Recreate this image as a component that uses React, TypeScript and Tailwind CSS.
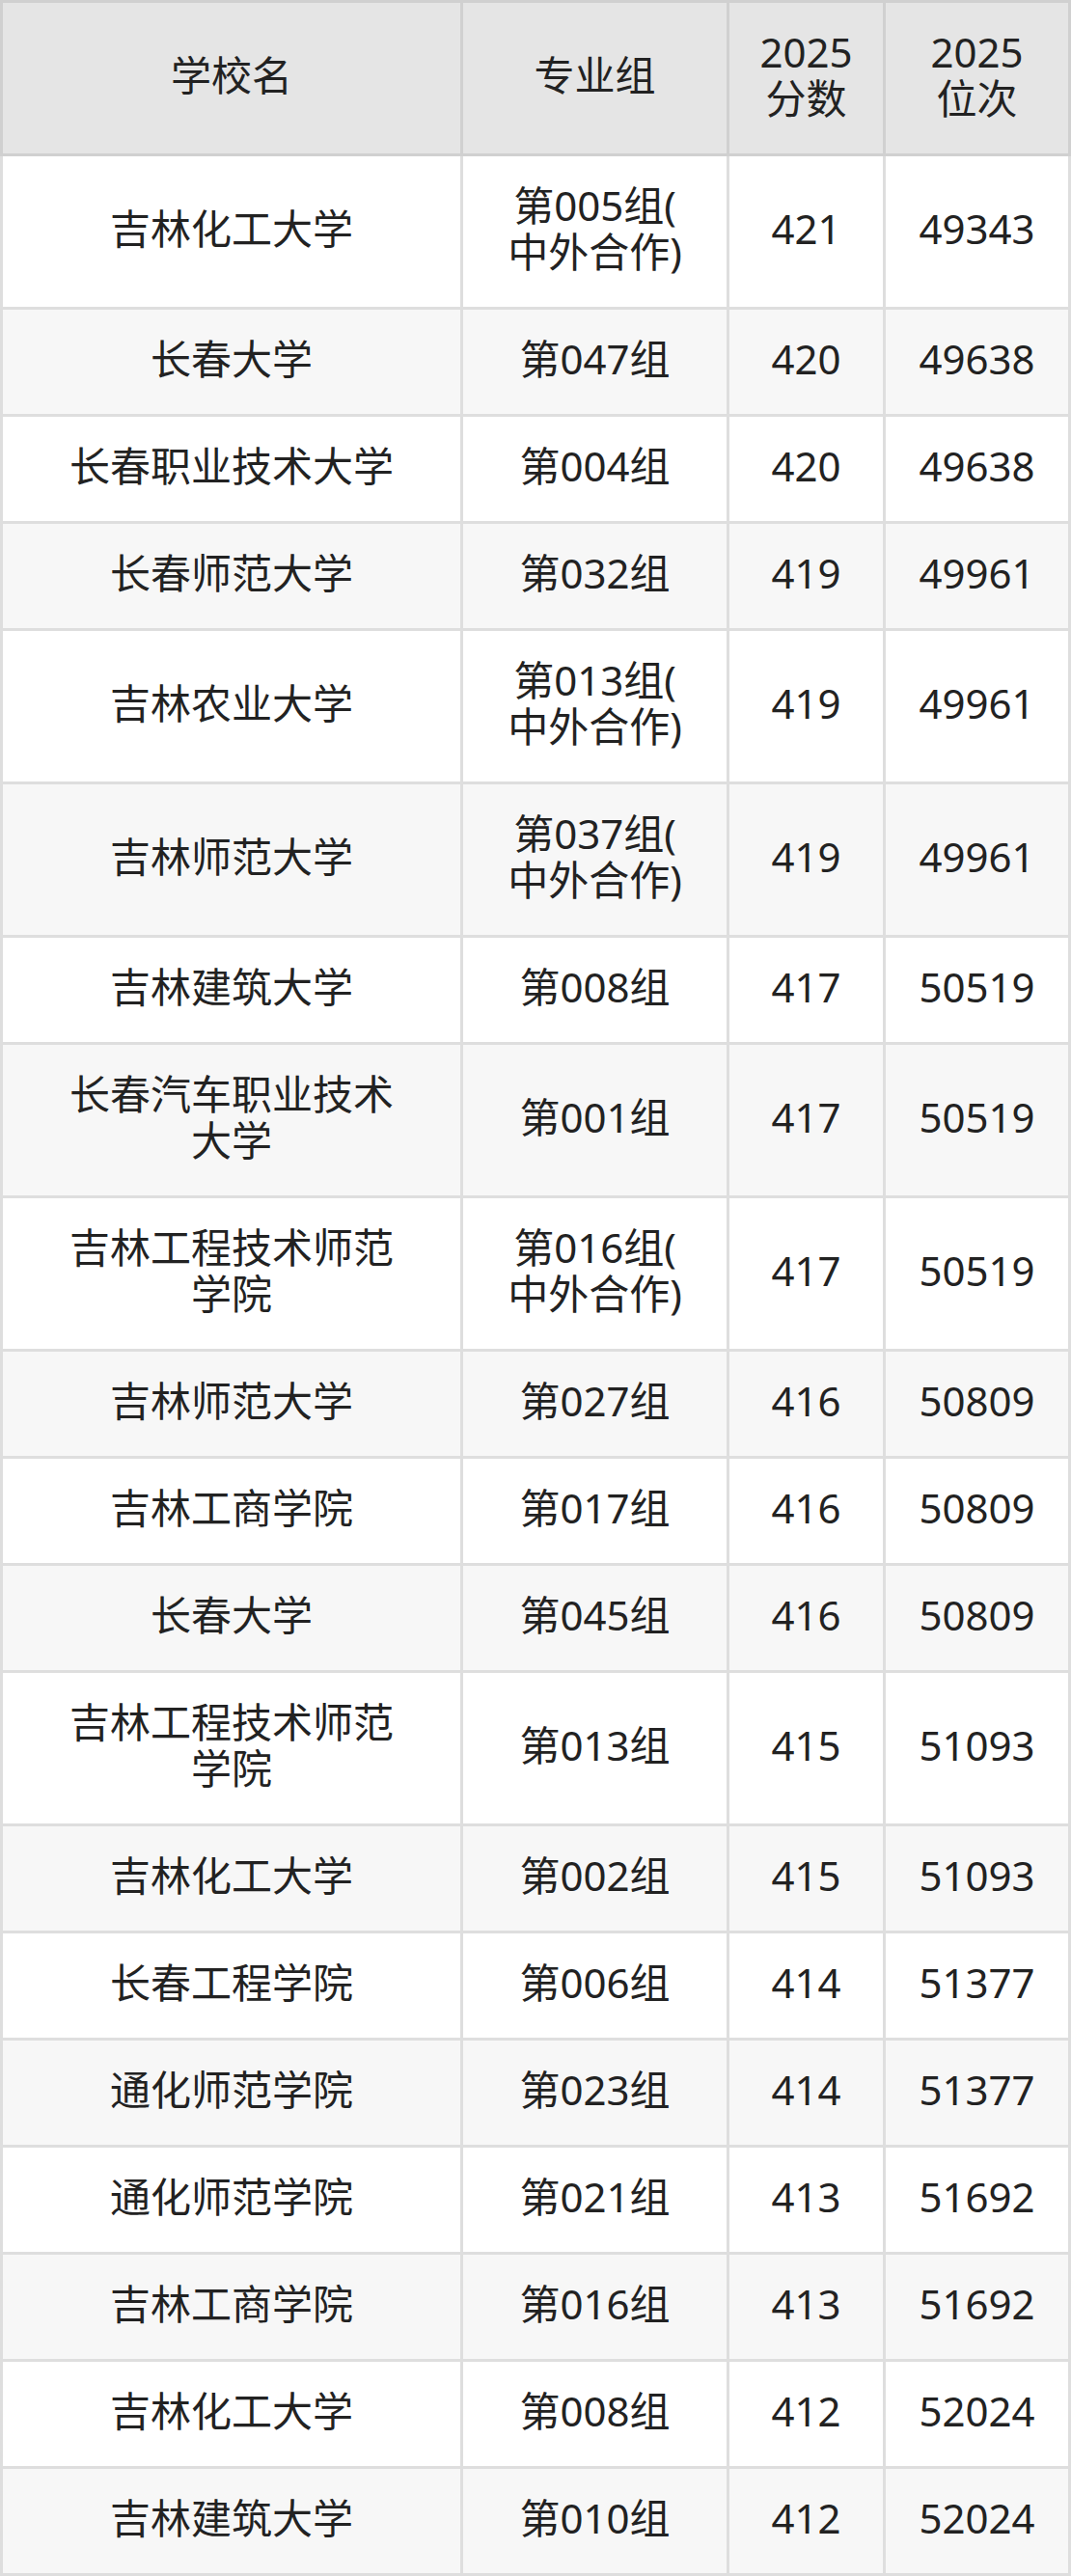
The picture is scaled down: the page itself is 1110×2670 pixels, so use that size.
import React from 'react';

type Row = {
    school: string[];
    group: string[];
    score: string;
    rank: string;
};

const rows: Row[] = [
    { school: ['吉林化工大学'], group: ['第005组(', '中外合作)'], score: '421', rank: '49343' },
    { school: ['长春大学'], group: ['第047组'], score: '420', rank: '49638' },
    { school: ['长春职业技术大学'], group: ['第004组'], score: '420', rank: '49638' },
    { school: ['长春师范大学'], group: ['第032组'], score: '419', rank: '49961' },
    { school: ['吉林农业大学'], group: ['第013组(', '中外合作)'], score: '419', rank: '49961' },
    { school: ['吉林师范大学'], group: ['第037组(', '中外合作)'], score: '419', rank: '49961' },
    { school: ['吉林建筑大学'], group: ['第008组'], score: '417', rank: '50519' },
    { school: ['长春汽车职业技术', '大学'], group: ['第001组'], score: '417', rank: '50519' },
    { school: ['吉林工程技术师范', '学院'], group: ['第016组(', '中外合作)'], score: '417', rank: '50519' },
    { school: ['吉林师范大学'], group: ['第027组'], score: '416', rank: '50809' },
    { school: ['吉林工商学院'], group: ['第017组'], score: '416', rank: '50809' },
    { school: ['长春大学'], group: ['第045组'], score: '416', rank: '50809' },
    { school: ['吉林工程技术师范', '学院'], group: ['第013组'], score: '415', rank: '51093' },
    { school: ['吉林化工大学'], group: ['第002组'], score: '415', rank: '51093' },
    { school: ['长春工程学院'], group: ['第006组'], score: '414', rank: '51377' },
    { school: ['通化师范学院'], group: ['第023组'], score: '414', rank: '51377' },
    { school: ['通化师范学院'], group: ['第021组'], score: '413', rank: '51692' },
    { school: ['吉林工商学院'], group: ['第016组'], score: '413', rank: '51692' },
    { school: ['吉林化工大学'], group: ['第008组'], score: '412', rank: '52024' },
    { school: ['吉林建筑大学'], group: ['第010组'], score: '412', rank: '52024' },
];

const Lines = ({ lines }: { lines: string[] }) => (
    <span>
        {lines.map((l, i) => (
            <span key={i} className="block whitespace-nowrap">{l}</span>
        ))}
    </span>
);

export default function App() {
    const head = 'flex items-center justify-center text-center pt-[27px] pb-[33px] bg-[#e5e5e5] border-t-[3px] border-r-[3px] border-b-[3px] border-[#d0d0d0]';

    return (
        <div
            className="w-[1110px] text-[#222222] text-[42px] leading-[48px]"
            style={{ fontFamily: '"Noto Sans", "Noto Sans CJK SC", sans-serif' }}
        >
            <div className="grid grid-cols-[480px_276px_162px_192px]">
                <div className={`${head} border-l-[3px]`}>学校名</div>
                <div className={head}>专业组</div>
                <div className={head}><Lines lines={['2025', '分数']} /></div>
                <div className={head}><Lines lines={['2025', '位次']} /></div>

                {rows.map((r, i) => {
                    const cell = `flex items-center justify-center text-center pt-[27px] pb-[33px] border-r-[3px] border-b-[3px] border-[#dedede] ${i % 2 === 1 ? 'bg-[#f7f7f7]' : 'bg-white'}`;
                    return (
                        <React.Fragment key={i}>
                            <div className={`${cell} border-l-[3px]`}><Lines lines={r.school} /></div>
                            <div className={cell}><Lines lines={r.group} /></div>
                            <div className={cell}>{r.score}</div>
                            <div className={cell}>{r.rank}</div>
                        </React.Fragment>
                    );
                })}
            </div>
        </div>
    );
}
